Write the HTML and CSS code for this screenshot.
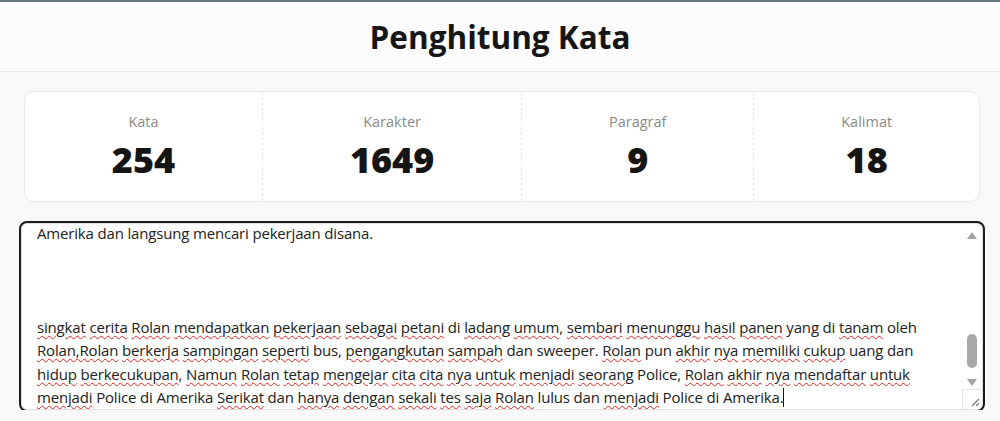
FILE: index.html
```html
<!DOCTYPE html>
<html lang="id">
<head>
  <meta charset="UTF-8" />
  <title>Penghitung Kata</title>
  <link rel="stylesheet" href="styles.css">
</head>
<body>
  <header class="topbar">
    <h1>Penghitung Kata</h1>
  </header>

  <main class="content">
    <section class="stats">
      <div class="stat">
        <div class="stat-label">Kata</div>
        <div class="stat-value">254</div>
      </div>
      <div class="stat">
        <div class="stat-label">Karakter</div>
        <div class="stat-value">1649</div>
      </div>
      <div class="stat">
        <div class="stat-label">Paragraf</div>
        <div class="stat-value">9</div>
      </div>
      <div class="stat">
        <div class="stat-label">Kalimat</div>
        <div class="stat-value">18</div>
      </div>
    </section>

    <div class="editor-box">
      <div class="editor" id="editor" role="textbox" aria-multiline="true"><p>Rolan adalah seorang anak yang lahir di sebuah desa kecil di pinggir kota. Sejak kecil Rolan sudah bercita cita menjadi seorang Police yang gagah dan berani.</p><p><br></p><p>Orang tua Rolan bekerja sebagai petani, mereka hidup sederhana namun selalu bahagia. Setiap hari Rolan membantu ayah nya di sawah sepulang sekolah.</p><p><br></p><p>Setelah lulus sekolah Rolan memutuskan untuk merantau ke luar negeri, ia menabung sedikit demi sedikit dari hasil bekerja di desa nya.</p><p><br></p><p>Dengan uang tabungan nya Rolan membeli tiket pesawat, lalu ia berpamitan kepada orang tua nya. Ia pun berangkat ke<br>Amerika dan langsung mencari pekerjaan disana.</p><p><br></p><p><br></p><p><br></p><p><span class="typo">singkat</span> <span class="typo">cerita</span> <span class="typo">Rolan</span> <span class="typo">mendapatkan</span> <span class="typo">pekerjaan</span> <span class="typo">sebagai</span> <span class="typo">petani</span> di <span class="typo">ladang</span> <span class="typo">umum</span>, <span class="typo">sembari</span> <span class="typo">menunggu</span> <span class="typo">hasil</span> <span class="typo">panen</span> yang di <span class="typo">tanam</span> oleh <span class="typo">Rolan,Rolan</span> <span class="typo">berkerja</span> <span class="typo">sampingan</span> <span class="typo">seperti</span> bus, <span class="typo">pengangkutan</span> <span class="typo">sampah</span> dan sweeper. <span class="typo">Rolan</span> pun <span class="typo">akhir</span> <span class="typo">nya</span> <span class="typo">memiliki</span> <span class="typo">cukup</span> uang dan <span class="typo">hidup</span> <span class="typo">berkecukupan</span>, <span class="typo">Namun</span> <span class="typo">Rolan</span> <span class="typo">tetap</span> <span class="typo">mengejar</span> <span class="typo">cita</span> <span class="typo">cita</span> <span class="typo">nya</span> <span class="typo">untuk</span> <span class="typo">menjadi</span> <span class="typo">seorang</span> Police, <span class="typo">Rolan</span> <span class="typo">akhir</span> <span class="typo">nya</span> <span class="typo">mendaftar</span> <span class="typo">untuk</span> <span class="typo">menjadi</span> Police di Amerika <span class="typo">Serikat</span> dan <span class="typo">hanya</span> <span class="typo">dengan</span> <span class="typo">sekali</span> <span class="typo">tes</span> <span class="typo">saja</span> <span class="typo">Rolan</span> lulus dan <span class="typo">menjadi</span> Police di Amerika.<span class="caret"></span></p></div>

      <div class="scrollbar">
        <span class="arrow arrow-up"></span>
        <div class="track">
          <div class="thumb"></div>
        </div>
        <span class="arrow arrow-down"></span>
        <div class="resizer">
          <svg width="19" height="19" viewBox="0 0 19 19"><path d="M9 16L16 9M13 16L16 13" stroke="#7a7a7a" stroke-width="1.2" fill="none"/></svg>
        </div>
      </div>
    </div>
  </main>

  <script>
    const editor = document.getElementById("editor");
    editor.scrollTop = editor.scrollHeight;
  </script>
</body>
</html>
```

FILE: styles.css
```css
body {
  margin: 0;
  font-family: "Open Sans", "Noto Sans", sans-serif;
  background-color: #f8f8f8;
  color: #1a1a1a;
  border-top: 2px solid #6b7785;
}

.topbar {
  background-color: #fcfcfc;
  border-bottom: 1px solid #ececec;
  height: 69px;
  display: flex;
  justify-content: center;
  align-items: center;
}

.topbar h1 {
  margin: 0;
  font-size: 31.5px;
  font-weight: 700;
  line-height: 44px;
  color: #161616;
}

.content {
  padding: 19px 17px 0 21px;
}

.stats {
  display: flex;
  margin: 0 3px;
  height: 111px;
  box-sizing: border-box;
  background-color: #fff;
  border: 1px solid #e8e8e8;
  border-radius: 10px;
}

.stat {
  flex: 1 1 auto;
  display: flex;
  flex-direction: column;
  align-items: center;
  padding-top: 20px;
  border-left: 1px dashed #e6e6e6;
}

.stat:first-child {
  border-left: none;
}

.stat-label {
  font-size: 14.5px;
  color: #8a8a8a;
  line-height: 19px;
}

.stat-value {
  margin-top: 8px;
  font-size: 36px;
  font-weight: 800;
  line-height: 42px;
  color: #151515;
}

.editor-box {
  display: flex;
  margin-top: 21px;
  height: 187px;
  box-sizing: border-box;
  background-color: #fff;
  border: 1px solid #dedede;
  outline: 2px solid #1c1c1c;
  border-radius: 6px;
}

.editor {
  flex: 1;
  overflow-y: scroll;
  scrollbar-width: none;
  padding: 2px 10px 0 15px;
  font-size: 15px;
  letter-spacing: -0.17px;
  line-height: 23.4px;
  color: #222;
}

.editor::-webkit-scrollbar {
  display: none;
}

.editor p {
  margin: 0;
}

.typo {
  text-decoration: underline wavy #e02020;
  text-decoration-thickness: 1px;
  text-underline-offset: 2px;
}

.caret {
  display: inline-block;
  width: 1px;
  height: 19px;
  background-color: #111;
  vertical-align: -4px;
}

.scrollbar {
  width: 20px;
  display: flex;
  flex-direction: column;
  align-items: center;
  padding-top: 8px;
}

.arrow {
  width: 0;
  height: 0;
  border-left: 5px solid transparent;
  border-right: 5px solid transparent;
}

.arrow-up {
  border-bottom: 7px solid #a3a3a3;
  margin-bottom: 4px;
}

.arrow-down {
  border-top: 7px solid #a3a3a3;
  margin: 3px 0 3px;
}

.track {
  flex: 1;
  display: flex;
  flex-direction: column;
  justify-content: flex-end;
  padding-bottom: 8px;
}

.thumb {
  width: 10px;
  height: 34px;
  border-radius: 5px;
  background-color: #a8a8a8;
}

.resizer {
  align-self: stretch;
  height: 19px;
  border-top: 1px solid #e4e4e4;
  border-left: 1px solid #e4e4e4;
}

.resizer svg {
  display: block;
}
```
